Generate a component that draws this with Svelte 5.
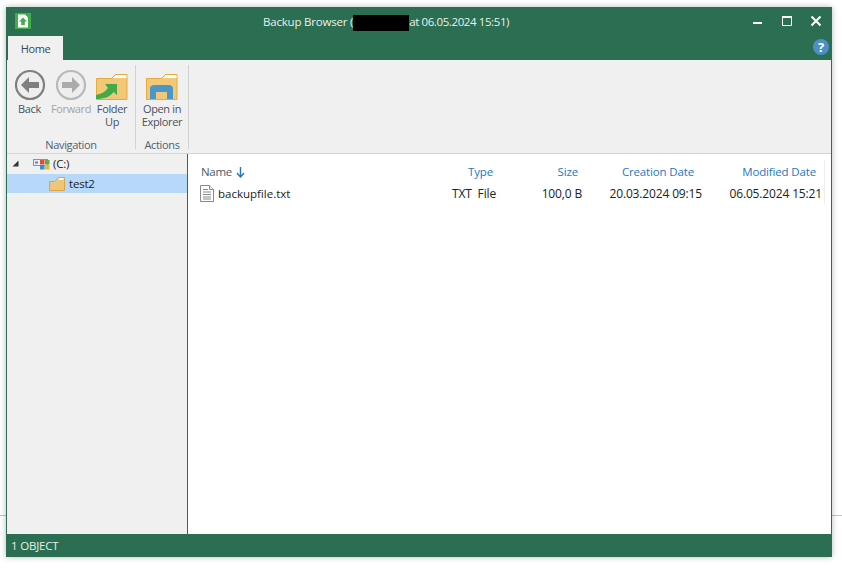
<script>
  const columns = [
    { label: 'Type', value: 'TXT  File', pad: 'p3' },
    { label: 'Size', value: '100,0 B', pad: 'p4' },
    { label: 'Creation Date', value: '20.03.2024 09:15', pad: 'p8' },
    { label: 'Modified Date', value: '06.05.2024 15:21', pad: 'p6' }
  ];
</script>

<div class="desktop">
  <div class="backline"></div>
  <div class="window">
    <header class="titlebar">
      <svg class="appicon" width="16" height="16" viewBox="0 0 16 16">
        <rect width="16" height="16" fill="#3fae49"/>
        <path d="M3 1.500h7l3 3v10H3z" fill="#fff"/>
        <path d="M8 4.500l4 4H9.800v3.500H6.200V8.500H4z" fill="#3fae49"/>
      </svg>
      <div class="title">Backup Browser (<span class="redact"></span><span class="when">at 06.05.2024 15:51)</span></div>
      <div class="winbtns">
        <svg width="12" height="12" viewBox="0 0 12 12"><rect x="1" y="7" width="9" height="2" fill="#fff"/></svg>
        <svg width="12" height="12" viewBox="0 0 12 12"><path d="M1.500 1.500h9v9h-9z" fill="none" stroke="#fff"/><rect x="1" y="1" width="10" height="2" fill="#fff"/></svg>
        <svg width="12" height="12" viewBox="0 0 12 12"><path d="M1.500 1.500l9 9M10.500 1.500l-9 9" stroke="#fff" stroke-width="2"/></svg>
      </div>
    </header>

    <div class="tabrow">
      <div class="tab">Home</div>
      <div class="help">?</div>
    </div>

    <section class="ribbon">
      <div class="group nav">
        <div class="buttons">
          <div class="rbtn back">
            <svg width="32" height="32" viewBox="0 0 32 32">
              <circle cx="16" cy="16" r="14" fill="#eee" stroke="#7f7f7f" stroke-width="2.200"/>
              <path d="M15 8l-8 8 8 8v-5h10v-6H15z" fill="#7f7f7f"/>
            </svg>
            <span>Back</span>
          </div>
          <div class="rbtn forward">
            <svg width="32" height="32" viewBox="0 0 32 32">
              <circle cx="16" cy="16" r="14" fill="#eee" stroke="#b9b9b9" stroke-width="2.200"/>
              <path d="M17 8l8 8-8 8v-5H7v-6h10z" fill="#ababab"/>
            </svg>
            <span>Forward</span>
          </div>
          <div class="rbtn up">
            <svg width="32" height="32" viewBox="0 0 32 32">
              <path d="M0.500 9.500h15l4-4h11.500v25H0.500z" fill="#f2c878" stroke="#e5a93c"/>
              <path d="M17 9l3-3h10.500v3z" fill="#fff"/>
              <path d="M0 30V26C5 25 9 23 12 19L9 15H21V26L17.500 23C14 28 8 30 0 30z" fill="#41ab4a"/>
            </svg>
            <span>Folder<br/>Up</span>
          </div>
        </div>
        <div class="grouplabel">Navigation</div>
      </div>
      <div class="group actions">
        <div class="buttons">
          <div class="rbtn explorer">
            <svg width="32" height="32" viewBox="0 0 32 32">
              <path d="M0.500 9.500h15l4-4h11.500v25H0.500z" fill="#f2c878" stroke="#e5a93c"/>
              <path d="M17 9l3-3h10.500v3z" fill="#fff"/>
              <path d="M4 30V20C4 17 6 16 8 16H23C25 16 27 17 27 20V30H21V23H10V30z" fill="#4a97c9"/>
            </svg>
            <span>Open in<br/>Explorer</span>
          </div>
        </div>
        <div class="grouplabel">Actions</div>
      </div>
    </section>

    <main class="body">
      <aside class="tree">
        <div class="node root">
          <svg class="caret" width="7" height="7" viewBox="0 0 7 7"><path d="M6.500 0.500v6h-6z" fill="#333"/></svg>
          <svg class="drive" width="17" height="13" viewBox="0 0 17 13">
            <rect x="0.500" y="2.500" width="14" height="6" fill="#e8f1f8" stroke="#6c9cc3"/>
            <rect x="2" y="4.500" width="3" height="2" fill="#3f8fc9"/>
            <rect x="7" y="3" width="4.500" height="4.500" fill="#e04b3a"/>
            <rect x="12" y="3" width="4.500" height="4.500" fill="#5fae3c"/>
            <rect x="7" y="8" width="4.500" height="4.500" fill="#2f8fd8"/>
            <rect x="12" y="8" width="4.500" height="4.500" fill="#f5b81d"/>
          </svg>
          <span>(C:)</span>
        </div>
        <div class="node sel">
          <svg width="16" height="14" viewBox="0 0 16 14">
            <path d="M0.500 4.500h5l4-4h6v13h-15z" fill="#eec679" stroke="#dba544"/>
            <path d="M9.500 2l1-1h4v2h-5z" fill="#fff"/>
          </svg>
          <span>test2</span>
        </div>
      </aside>

      <div class="list">
        <div class="cell head name"><span>Name</span><svg width="9" height="12" viewBox="0 0 9 12"><path d="M4.500 1v9M1 7l3.500 4L8 7" fill="none" stroke="#1f78c1" stroke-width="1.400"/></svg></div>
        {#each columns as c}
          <div class="cell head right {c.pad}">{c.label}</div>
        {/each}
        <div class="cell name file">
          <svg width="14" height="17" viewBox="0 0 14 17">
            <path d="M0.500 0.500h9l4 4v12h-13z" fill="#fff" stroke="#8a8a8a"/>
            <path d="M9.500 0.500v4h4" fill="#eee" stroke="#8a8a8a"/>
            <path d="M3 4.500h5M3 7h8M3 9.500h8M3 12h8M3 14h8" stroke="#8a8a8a"/>
          </svg>
          <span>backupfile.txt</span>
        </div>
        {#each columns as c}
          <div class="cell right val">{c.value}</div>
        {/each}
        <div class="divider"></div>
      </div>
    </main>

    <footer class="status">1 OBJECT</footer>
  </div>
</div>

<style>
  :global(body) {
    margin: 0;
    background: #fff;
  }
  .desktop {
    position: relative;
    box-sizing: border-box;
    width: 842px;
    height: 568px;
    padding: 7px 10px 11px 6px;
    background: #fff;
    font-family: "Open Sans", "Noto Sans", sans-serif;
    font-size: 11.5px;
    overflow: hidden;
  }
  .backline {
    position: absolute;
    left: 0;
    right: 0;
    top: 515px;
    height: 1px;
    background: #c4c4c4;
  }
  .window {
    position: relative;
    height: 100%;
    display: flex;
    flex-direction: column;
    background: #2c6e51;
    box-shadow: 0 0 6px rgba(0, 0, 0, 0.28);
    letter-spacing: -0.2px;
  }
  .titlebar {
    position: relative;
    height: 29px;
    display: flex;
    align-items: center;
    flex: none;
    padding-left: 9px;
  }
  .appicon {
    margin-top: -1px;
  }
  .title {
    position: absolute;
    left: 257px;
    top: 7px;
    color: #e9f1ed;
    font-size: 11.5px;
    line-height: 16px;
    white-space: nowrap;
    display: flex;
  }
  .when {
    letter-spacing: -0.4px;
  }
  .redact {
    display: inline-block;
    width: 56px;
    height: 16px;
    background: #000;
    margin-top: 1px;
    margin-left: 0;
  }
  .winbtns {
    margin-left: auto;
    display: flex;
    gap: 17px;
    padding-right: 10px;
    margin-top: -2px;
  }
  .tabrow {
    height: 24px;
    flex: none;
    display: flex;
    justify-content: space-between;
    align-items: flex-start;
    padding: 0 3px 0 2px;
  }
  .tab {
    width: 55px;
    height: 24px;
    background: #f0f0f0;
    color: #35495a;
    display: flex;
    align-items: center;
    justify-content: center;
    font-size: 11px;
    letter-spacing: -0.4px;
  }
  .help {
    width: 16px;
    height: 16px;
    border-radius: 50%;
    background: #4a90c4;
    color: #fff;
    font: bold 13px/16px "Open Sans", sans-serif;
    text-align: center;
    margin-top: 3px;
  }
  .ribbon {
    height: 94px;
    flex: none;
    margin: 0 1px;
    display: flex;
    background: #f0f0f0;
    border-bottom: 1px solid #d4d4d4;
    box-sizing: border-box;
    color: #46535f;
    font-size: 11px;
    letter-spacing: -0.35px;
  }
  .group {
    display: flex;
    flex-direction: column;
    align-items: center;
    height: 84px;
    margin-top: 5px;
    border-right: 1px solid #d2d2d2;
    box-sizing: border-box;
  }
  .nav {
    width: 129px;
  }
  .actions {
    width: 53px;
  }
  .buttons {
    display: flex;
    flex: 1;
    align-self: stretch;
  }
  .rbtn {
    display: flex;
    flex-direction: column;
    align-items: center;
    line-height: 13px;
    text-align: center;
    padding-top: 4px;
  }
  .rbtn span {
    margin-top: 1px;
  }
  .back {
    width: 45px;
  }
  .forward {
    width: 38px;
    color: #a3a3a3;
  }
  .up {
    width: 32px;
    margin-left: 6px;
  }
  .explorer {
    width: 52px;
  }
  .grouplabel {
    line-height: 14px;
    margin-bottom: -3px;
    color: #4f6170;
  }
  .body {
    flex: 1;
    min-height: 0;
    display: flex;
    margin: 0 1px;
    background: #fff;
  }
  .tree {
    width: 180px;
    flex: none;
    background: #f0f0f0;
    border-right: 1px solid #2c6e51;
    color: #222;
  }
  .node {
    height: 19px;
    display: flex;
    align-items: center;
  }
  .root {
    height: 20px;
    padding: 0 0 2px 5px;
    box-sizing: border-box;
  }
  .caret {
    margin-right: 14px;
  }
  .drive {
    margin-right: 3px;
  }
  .sel {
    background: #b7d8f9;
    padding-left: 42px;
    gap: 4px;
  }
  .list {
    position: relative;
    flex: 1;
    display: grid;
    grid-template-columns: 200px 108px 86px 120px 120px;
    grid-template-rows: 29px 20px;
    align-content: start;
    color: #222;
    letter-spacing: -0.15px;
  }
  .cell {
    display: flex;
    align-items: center;
    white-space: pre;
  }
  .head {
    color: #1f78c1;
    padding-top: 6px;
  }
  .name {
    padding-left: 13px;
    gap: 4px;
  }
  .head.name {
    color: #4a5a68;
    letter-spacing: -0.3px;
  }
  .file {
    gap: 4px;
    padding-left: 12px;
    letter-spacing: 0;
  }
  .val {
    font-size: 12px;
  }
  .right {
    justify-content: flex-end;
  }
  .p3 {
    padding-right: 3px;
  }
  .p4 {
    padding-right: 4px;
  }
  .p8 {
    padding-right: 8px;
  }
  .p6 {
    padding-right: 6px;
  }
  .divider {
    position: absolute;
    left: 636px;
    top: 6px;
    width: 1px;
    height: 44px;
    background: #efefef;
  }
  .status {
    flex: none;
    height: 23px;
    line-height: 24px;
    padding-left: 5px;
    color: #e4eee9;
    font-size: 11.5px;
  }
</style>
